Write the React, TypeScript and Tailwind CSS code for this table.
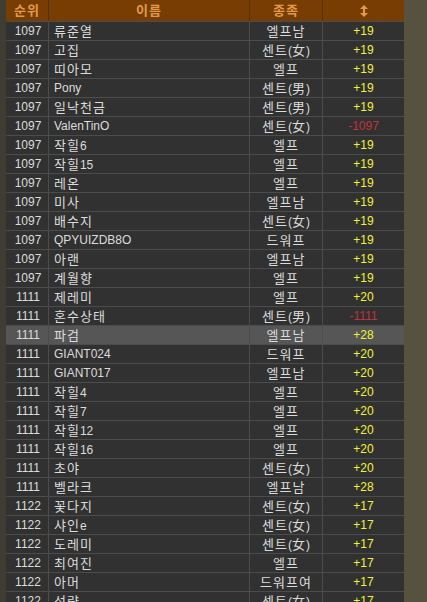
type Row = [string, string, string, string];

const ROWS: Row[] = [
  ["1097", "류준열", "엘프남", "+19"],
  ["1097", "고집", "센트(女)", "+19"],
  ["1097", "띠아모", "엘프", "+19"],
  ["1097", "Pony", "센트(男)", "+19"],
  ["1097", "일낙천금", "센트(男)", "+19"],
  ["1097", "ValenTinO", "센트(女)", "-1097"],
  ["1097", "작힐6", "엘프", "+19"],
  ["1097", "작힐15", "엘프", "+19"],
  ["1097", "레온", "엘프", "+19"],
  ["1097", "미사", "엘프남", "+19"],
  ["1097", "배수지", "센트(女)", "+19"],
  ["1097", "QPYUIZDB8O", "드워프", "+19"],
  ["1097", "아랜", "엘프남", "+19"],
  ["1097", "계월향", "엘프", "+19"],
  ["1111", "제레미", "엘프", "+20"],
  ["1111", "혼수상태", "센트(男)", "-1111"],
  ["1111", "파검", "엘프남", "+28"],
  ["1111", "GIANT024", "드워프", "+20"],
  ["1111", "GIANT017", "엘프남", "+20"],
  ["1111", "작힐4", "엘프", "+20"],
  ["1111", "작힐7", "엘프", "+20"],
  ["1111", "작힐12", "엘프", "+20"],
  ["1111", "작힐16", "엘프", "+20"],
  ["1111", "초야", "센트(女)", "+20"],
  ["1111", "벨라크", "엘프남", "+28"],
  ["1122", "꽃다지", "센트(女)", "+17"],
  ["1122", "샤인e", "센트(女)", "+17"],
  ["1122", "도레미", "센트(女)", "+17"],
  ["1122", "최여진", "엘프", "+17"],
  ["1122", "아머", "드워프여", "+17"],
  ["1122", "석량", "센트(女)", "+17"],
];

// 선택된 캐릭터 행
const HIGHLIGHT = "파검";

const COLS = "grid grid-cols-[43px_201px_73px_81px]";

// 한글/한자는 굴림처럼 조금 넓게
function Txt({ s }: { s: string }) {
  const parts = s.split(/([\uAC00-\uD7A3\u4E00-\u9FFF]+)/);
  return (
    <span className="whitespace-nowrap">
      {parts.map((p, i) =>
        /[\uAC00-\uD7A3\u4E00-\u9FFF]/.test(p) ? (
          <span key={i} className="text-[13px] tracking-[1px]">
            {p}
          </span>
        ) : (
          <span key={i}>{p}</span>
        )
      )}
    </span>
  );
}

export default function App() {
  return (
    <div
      className="flex h-[602px] w-[427px] overflow-hidden bg-[#57513f] text-[12px] leading-none"
      style={{ fontFamily: '"Liberation Sans", "Noto Sans CJK KR", sans-serif' }}
    >
      <div className="w-[6px] shrink-0 bg-[#3f3c33]" />
      <div className="flex w-[398px] shrink-0 flex-col">
        {/* 헤더 */}
        <div className={`${COLS} h-[21px] shrink-0 bg-[#773d02] font-bold text-[#e49a4a]`}>
          <div className="flex items-center justify-center border-r border-[#5a3003]"><Txt s="순위" /></div>
          <div className="flex items-center justify-center border-r border-[#5a3003]"><Txt s="이름" /></div>
          <div className="flex items-center justify-center border-r border-[#5a3003]"><Txt s="종족" /></div>
          <div className="flex items-center justify-center">
            <svg width="8" height="12" viewBox="0 0 8 12" fill="#e49a4a">
              <path d="M4 0 L8 4 H5 V8 H8 L4 12 L0 8 H3 V4 H0 Z" />
            </svg>
          </div>
        </div>

        {ROWS.map(([rank, name, race, diff], i) => {
          const hl = name === HIGHLIGHT;
          const neg = diff.startsWith("-");
          return (
            <div
              key={i}
              className={`${COLS} h-[19px] shrink-0 border-t border-[#4c4c4c] text-[#dcdcdc] ${
                hl ? "bg-[#565656]" : "bg-[#313131]"
              }`}
            >
              <div className="flex items-center justify-center border-r border-[#4c4c4c] pl-[2px]">{rank}</div>
              <div className="flex items-center border-r border-[#4c4c4c] pl-[5px]"><Txt s={name} /></div>
              <div className="flex items-center justify-center border-r border-[#4c4c4c]"><Txt s={race} /></div>
              <div
                className={`flex items-center justify-center ${neg ? "text-[#c2323f]" : "text-[#f2f23a]"}`}
              >
                {diff}
              </div>
            </div>
          );
        })}
      </div>
    </div>
  );
}
